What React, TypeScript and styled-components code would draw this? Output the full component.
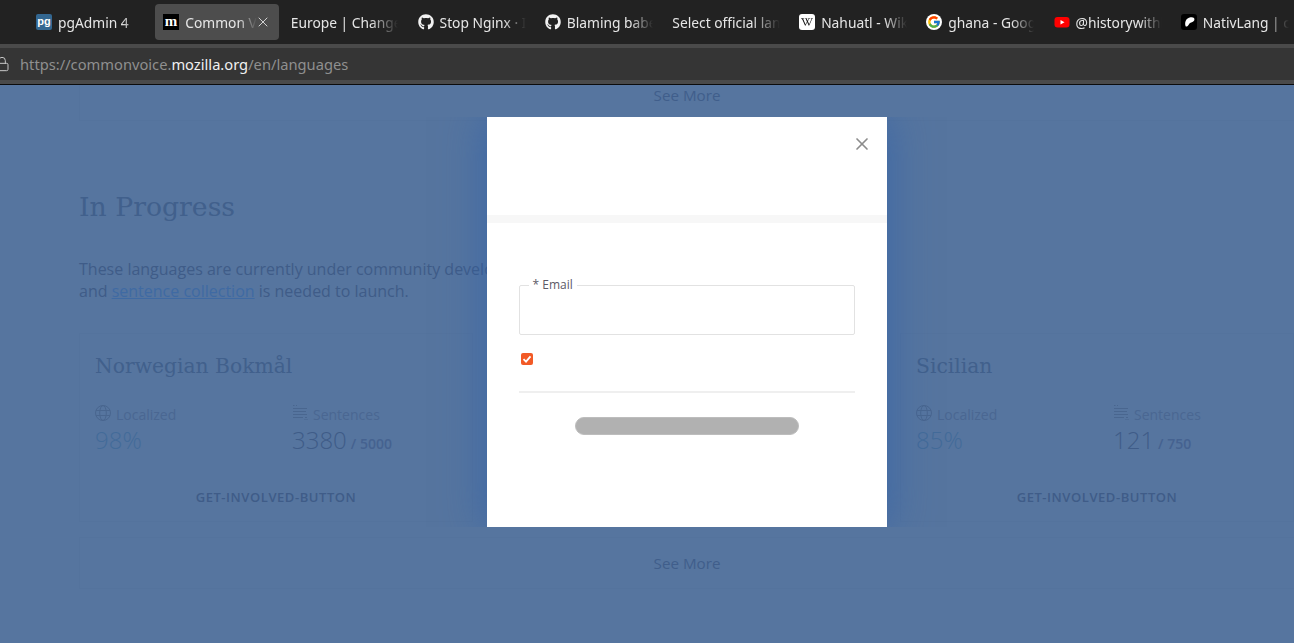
import React from "react";
import styled, { createGlobalStyle } from "styled-components";
import { FaGithub, FaWikipediaW } from "react-icons/fa";
import { FcGoogle } from "react-icons/fc";
import { Lock, X } from "lucide-react";

const Global = createGlobalStyle`
  html, body { margin: 0; padding: 0; height: 100%; overflow: hidden; background: #56759f; }
  #root { height: 100%; }
`;

const Shell = styled.div`
  width: 1294px;
  height: 643px;
  overflow: hidden;
  position: relative;
  display: flex;
  flex-direction: column;
  background: #56759f;
`;

const TabBar = styled.div`
  height: 44px;
  flex: none;
  background: #222222;
  display: flex;
  gap: 3.2px;
  padding: 4px 0 4px 28px;
  box-sizing: border-box;
  overflow: hidden;
`;

const Tab = styled.div<{ $active?: boolean }>`
  width: 124px;
  flex: none;
  height: 36px;
  box-sizing: border-box;
  padding: 0 8px;
  border-radius: 4px;
  background: ${(p) => (p.$active ? "#4d4d4d" : "transparent")};
  display: flex;
  align-items: center;
  gap: 6px;
  position: relative;
`;

const TabLabel = styled.span<{ $plain?: boolean; $active?: boolean }>`
  font: 13.8px "Noto Sans", sans-serif;
  color: #e6e6e6;
  white-space: nowrap;
  overflow: hidden;
  flex: 1;
  margin-left: ${(p) => (p.$plain ? 0.4 : 0)}px;
  margin-right: ${(p) => (p.$active ? 14 : 0)}px;
  -webkit-mask-image: linear-gradient(to right, #000 74%, transparent 100%);
  mask-image: linear-gradient(to right, #000 74%, transparent 100%);
`;

const TabClose = styled.span`
  position: absolute;
  right: 8px;
  top: 10px;
  width: 16px;
  height: 16px;
  color: #e8e8e8;
  display: flex;
`;

const Favicon = styled.span`
  width: 16px;
  height: 16px;
  flex: none;
  display: block;
`;

const Strip = styled.div`
  height: 4px;
  flex: none;
  background: #4a4a4a;
`;

const UrlBar = styled.div`
  height: 32px;
  flex: none;
  background: #353535;
  display: flex;
  align-items: center;
  gap: 10px;
  margin-left: -6px;
  font: 14.7px "Noto Sans", sans-serif;
  color: #8f8f8f;
`;

const UrlHost = styled.span`
  color: #f0f0f0;
`;

const UrlText = styled.div`
  white-space: nowrap;
`;

const BlackLine = styled.div`
  height: 1px;
  flex: none;
  background: #0c0c0c;
`;

const Page = styled.main`
  flex: 1;
  padding-left: 79px;
  font-family: "Open Sans", "Noto Sans", sans-serif;
  color: #3f5c88;
  overflow: hidden;
`;

const SeeMoreBox = styled.div<{ $tall?: boolean }>`
  box-sizing: border-box;
  height: ${(p) => (p.$tall ? 52 : 36)}px;
  border: 1px solid #54739d;
  border-top-width: ${(p) => (p.$tall ? 1 : 0)}px;
  border-right: 0;
  font-size: 15.2px;
  line-height: 21px;
  text-align: center;
  color: #405e8b;
  padding-top: ${(p) => (p.$tall ? 15 : 0)}px;
  margin-top: ${(p) => (p.$tall ? 15 : 0)}px;
`;

const Heading = styled.h2`
  margin: 64px 0 0;
  font: 400 26.7px/44px "DejaVu Serif", "Liberation Serif", serif;
  color: #41608c;
`;

const Para = styled.p`
  margin: 29px 0 0;
  font-size: 16px;
  line-height: 22px;
  color: #3f5c88;
  white-space: nowrap;
`;

const SentenceLink = styled.span`
  color: #3f6aa3;
  text-decoration: underline;
`;

const CardGrid = styled.div`
  display: grid;
  grid-template-columns: repeat(3, 394px);
  gap: 16.5px;
  margin-top: 31px;
`;

const Card = styled.section`
  box-sizing: border-box;
  height: 189px;
  border: 1px solid #54739d;
  padding: 16px 15px 0;
`;

const CardTitle = styled.h3`
  margin: 0;
  font: 400 20.3px/32px "DejaVu Serif", "Liberation Serif", serif;
  color: #41608c;
`;

const Stats = styled.div`
  display: grid;
  grid-template-columns: 181px 181px;
  gap: 16px;
  margin-top: 24px;
`;

const StatLabel = styled.div`
  display: flex;
  align-items: flex-end;
  gap: 5px;
  font-size: 14px;
  line-height: 17px;
  color: #4a6792;
  height: 17px;
`;

const StatValue = styled.div<{ $accent?: boolean }>`
  margin-top: 1px;
  font-size: 24px;
  font-weight: 300;
  line-height: 32px;
  color: ${(p) => (p.$accent ? "#436b99" : "#3f5c88")};
`;

const StatTotal = styled.span`
  font-size: 14px;
  font-weight: 600;
  margin-left: 4px;
  color: #456290;
`;

const Involve = styled.div`
  margin-top: 28px;
  text-align: center;
  font-size: 13px;
  font-weight: 600;
  letter-spacing: 0.55px;
  line-height: 18px;
  color: #3f5c88;
`;

const Overlay = styled.div`
  position: absolute;
  left: 79px;
  right: 0;
  top: 117px;
  display: flex;
  justify-content: center;
`;

const Modal = styled.div`
  width: 400px;
  height: 410px;
  background: #ffffff;
  position: relative;
  box-shadow: 0 0 40px 2px rgba(45, 95, 170, 0.66);
  clip-path: inset(0 -60px);
  display: flex;
  flex-direction: column;
  font-family: "Open Sans", "Noto Sans", sans-serif;
`;

const CloseBtn = styled.button`
  position: absolute;
  top: 17px;
  right: 15px;
  width: 20px;
  height: 20px;
  padding: 0;
  border: 0;
  background: none;
  color: #8c8c8c;
  display: flex;
`;

const ModalHead = styled.div`
  height: 98px;
  flex: none;
  border-bottom: 8px solid #f7f7f7;
`;

const ModalBody = styled.form`
  padding: 55px 32px 0;
  display: flex;
  flex-direction: column;
`;

const Field = styled.fieldset`
  box-sizing: border-box;
  margin: 0;
  padding: 0;
  height: 57px;
  border: 1px solid #e2e2e2;
  border-radius: 2px;
`;

const Legend = styled.legend`
  margin-left: 9px;
  padding: 0 4px;
  font-size: 12px;
  line-height: 14px;
  color: #5c5a66;
`;

const CheckRow = styled.div`
  margin: 18px 0 0 2px;
  height: 12px;
`;

const Check = styled.span`
  width: 12px;
  height: 12px;
  border-radius: 2px;
  background: #f25a26;
  display: flex;
  align-items: center;
  justify-content: center;
`;

const Divider = styled.hr`
  margin: 26px 0 0;
  border: 0;
  height: 2px;
  background: #efefef;
`;

const Submit = styled.button`
  margin: 24px auto 0;
  width: 224px;
  height: 18px;
  box-sizing: border-box;
  border-radius: 9px;
  border: 1px solid #bdbdbd;
  background: #b1b1b1;
  padding: 0;
`;

const Icon16 = styled.span`
  width: 16px;
  height: 16px;
  display: block;
  flex: none;
  margin-bottom: 2px;
  color: #49668f;
`;

const GlobeIcon = () => (
  <svg width="16" height="16" viewBox="0 0 16 16" fill="none" stroke="currentColor" strokeWidth="1">
    <circle cx="8" cy="8" r="7.500" />
    <ellipse cx="8" cy="8" rx="3.300" ry="7.500" />
    <path d="M1 5.500h14M1 10.500h14" />
  </svg>
);

const SentencesIcon = () => (
  <svg width="16" height="16" viewBox="0 0 16 16" fill="none" stroke="currentColor" strokeWidth="1">
    <path d="M1 .5h1.500M4 .5h1M1 3.500h14M1 6.500h13M1 9.500h14M1 12.500h10M13 12.500h2M13 15v-1M15 15v-1" />
  </svg>
);

const StatBlock = ({ pct, got, total }: { pct: string; got: string; total: string }) => (
  <Stats>
    <div>
      <StatLabel>
        <Icon16>
          <GlobeIcon />
        </Icon16>
        Localized
      </StatLabel>
      <StatValue $accent>{pct}</StatValue>
    </div>
    <div>
      <StatLabel>
        <Icon16>
          <SentencesIcon />
        </Icon16>
        Sentences
      </StatLabel>
      <StatValue>
        {got}
        <StatTotal>/ {total}</StatTotal>
      </StatValue>
    </div>
  </Stats>
);

const LangCard = ({ name, pct, got, total }: { name: string; pct: string; got: string; total: string }) => (
  <Card>
    <CardTitle>{name}</CardTitle>
    <StatBlock pct={pct} got={got} total={total} />
    <Involve>GET-INVOLVED-BUTTON</Involve>
  </Card>
);

const PgIcon = () => (
  <svg width="16" height="16" viewBox="0 0 16 16">
    <rect width="16" height="16" rx="2" fill="#336791" />
    <text x="8" y="11" textAnchor="middle" fontFamily="Liberation Sans, sans-serif" fontWeight="700" fontSize="11" fill="#fff">
      pg
    </text>
  </svg>
);

const MozIcon = () => (
  <svg width="16" height="16" viewBox="0 0 16 16">
    <rect width="16" height="16" fill="#000" />
    <text x="8" y="12" textAnchor="middle" fontFamily="Liberation Serif, serif" fontWeight="700" fontSize="15" fill="#fff">
      m
    </text>
  </svg>
);

const WikiBox = styled.span`
  width: 16px;
  height: 16px;
  border-radius: 3px;
  background: #fff;
  display: flex;
  align-items: center;
  justify-content: center;
`;

const WikiIcon = () => (
  <WikiBox>
    <FaWikipediaW size={12} color="#111" />
  </WikiBox>
);

const GoogleBox = styled.span`
  width: 16px;
  height: 16px;
  border-radius: 50%;
  background: #fff;
  display: flex;
  align-items: center;
  justify-content: center;
`;

const YtIcon = () => (
  <svg width="16" height="16" viewBox="0 0 16 16">
    <rect x="0.500" y="3" width="15" height="10.500" rx="3" fill="#f00" />
    <path d="M6.500 6v4.500L10.500 8.200z" fill="#fff" />
  </svg>
);

const NativIcon = () => (
  <svg width="16" height="16" viewBox="0 0 16 16">
    <rect width="16" height="16" rx="3" fill="#000" />
    <path d="M4.500 12C3.500 8 5 4 9.500 3.200 12.500 2.800 14 4.200 13.300 6.200 12.600 8 10.500 8 9 9 8 9.800 7.500 12 6 12.500 5.300 12.700 4.700 12.600 4.500 12z" fill="#fff" />
  </svg>
);

const tabs: { icon?: React.ReactNode; label: string; active?: boolean }[] = [
  { icon: <PgIcon />, label: "pgAdmin 4" },
  { icon: <MozIcon />, label: "Common Voice", active: true },
  { label: "Europe | Change.org" },
  { icon: <FaGithub size={16} color="#f2f2f2" />, label: "Stop Nginx · Issue" },
  { icon: <FaGithub size={16} color="#f2f2f2" />, label: "Blaming babel" },
  { label: "Select official language" },
  { icon: <WikiIcon />, label: "Nahuatl - Wikipedia" },
  { icon: <GoogleBox><FcGoogle size={14} /></GoogleBox>, label: "ghana - Google" },
  { icon: <YtIcon />, label: "@historywithkayleigh" },
  { icon: <NativIcon />, label: "NativLang | con" },
];

export default function App() {
  return (
    <Shell>
      <Global />
      <TabBar>
        {tabs.map((t) => (
          <Tab key={t.label} $active={t.active}>
            {t.icon && <Favicon>{t.icon}</Favicon>}
            <TabLabel $plain={!t.icon} $active={t.active}>{t.label}</TabLabel>
            {t.active && (
              <TabClose>
                <X size={16} strokeWidth={1.3} />
              </TabClose>
            )}
          </Tab>
        ))}
      </TabBar>
      <Strip />
      <UrlBar>
        <Lock size={16} strokeWidth={1.5} color="#c8c8c8" />
        <UrlText>
          https://commonvoice.<UrlHost>mozilla.org</UrlHost>/en/languages
        </UrlText>
      </UrlBar>
      <Strip />
      <BlackLine />
      <Page>
        <SeeMoreBox>See More</SeeMoreBox>
        <Heading>In Progress</Heading>
        <Para>
          These languages are currently under community development. Help with localization
          <br />
          and <SentenceLink>sentence collection</SentenceLink> is needed to launch.
        </Para>
        <CardGrid>
          <LangCard name="Norwegian Bokmål" pct="98%" got="3380" total="5000" />
          <LangCard name="Scots" pct="90%" got="500" total="5000" />
          <LangCard name="Sicilian" pct="85%" got="121" total="750" />
        </CardGrid>
        <SeeMoreBox $tall>See More</SeeMoreBox>
      </Page>
      <Overlay>
        <Modal>
          <CloseBtn type="button" aria-label="Close">
            <X size={20} strokeWidth={2} />
          </CloseBtn>
          <ModalHead />
          <ModalBody>
            <Field>
              <Legend>* Email</Legend>
            </Field>
            <CheckRow>
              <Check>
                <svg width="10" height="10" viewBox="0 0 10 10" fill="none" stroke="#fff" strokeWidth="1.8">
                  <path d="M1.500 5.200 4 7.600 8.500 2.400" />
                </svg>
              </Check>
            </CheckRow>
            <Divider />
            <Submit type="button" aria-label="Submit" />
          </ModalBody>
        </Modal>
      </Overlay>
    </Shell>
  );
}
